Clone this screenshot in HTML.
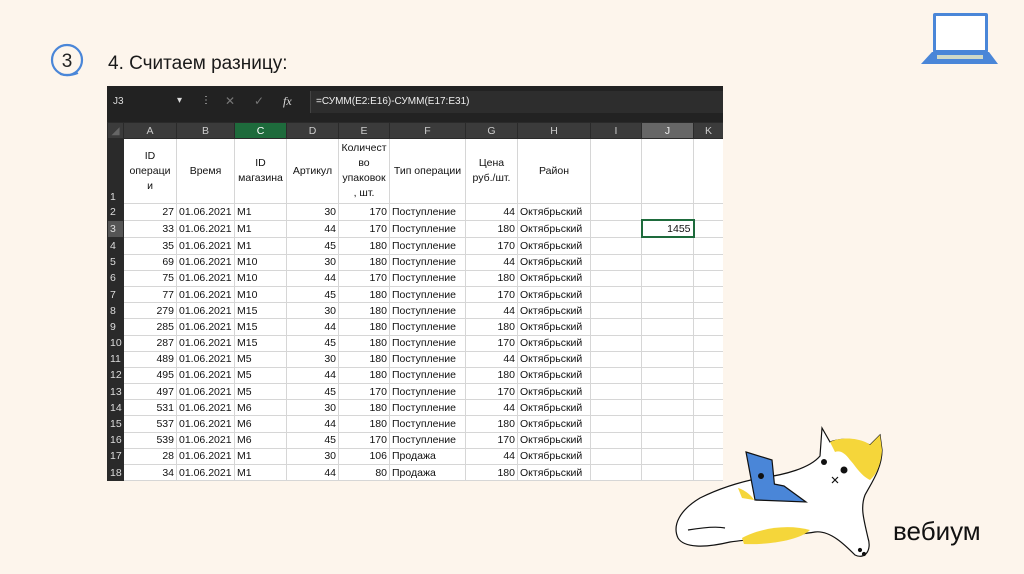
<!DOCTYPE html>
<html><head><meta charset="utf-8"><style>
body{margin:0;width:1024px;height:574px;background:#fdf5ec;position:relative;overflow:hidden;font-family:"Liberation Sans",sans-serif}
.t{position:absolute;left:108px;top:53px;font-size:19px;color:#1a1a1a}
.sheet{position:absolute;left:107px;top:86px;width:616px;height:395px;background:#222;overflow:hidden}
.fb{position:absolute;left:0;top:7px;height:20px;width:616px;font-size:10px;color:#ddd}
table{position:absolute;left:0;top:36px;width:616px;border-collapse:collapse;table-layout:fixed;font-family:"Liberation Sans",sans-serif;font-size:10.5px}
td{border:1px solid #d6d6d6;background:#fff;height:15.2px;padding:0 2px;white-space:nowrap;overflow:hidden;color:#111}
tr.h td{background:#3b3b3b;color:#ccc;text-align:center;height:15px;border:1px solid #2a2a2a}
td.rn{background:#2a2a2a;color:#ddd;border:1px solid #2a2a2a;text-align:left;padding-left:2px}
.r{text-align:right}.c{text-align:center;white-space:normal;line-height:15px}
</style></head><body>
<svg style="position:absolute;left:48px;top:42px" width="38" height="38"><circle cx="19" cy="18" r="15" fill="none" stroke="#4a86d8" stroke-width="2.2"/><path d="M12 32 Q20 35 30 31" stroke="#4a86d8" stroke-width="2" fill="none"/><text x="19" y="25" font-size="19" text-anchor="middle" font-family="Liberation Sans" fill="#222">3</text></svg>
<div class="t">4. Считаем разницу:</div>
<svg style="position:absolute;left:918px;top:10px" width="82" height="58"><rect x="15" y="3" width="55" height="40" rx="2" fill="#4a86d8"/><rect x="18" y="6" width="49" height="34" fill="#fff"/><path d="M14 42 H71 L80 54 H3 Z" fill="#4a86d8"/><rect x="19" y="45" width="46" height="4" fill="#cfd9c8"/></svg>
<div class="sheet">
<div class="fb"><span style="position:absolute;left:6px;top:3px">J3</span><span style="position:absolute;left:70px;top:2px">▾</span><span style="position:absolute;left:94px;top:2px">⋮</span><span style="position:absolute;left:118px;top:1px;color:#777;font-size:12px">✕</span><span style="position:absolute;left:147px;top:1px;color:#777;font-size:12px">✓</span><span style="position:absolute;left:176px;top:1px;font-style:italic;font-family:'Liberation Serif';font-size:12px">fx</span><div style="position:absolute;left:203px;top:-2px;width:413px;height:22px;background:#2d2d2d;border-left:1px solid #444"><span style="position:absolute;left:5px;top:5px;color:#eee">=СУММ(E2:E16)-СУММ(E17:E31)</span></div></div>
<table>
<colgroup><col style="width:16px"><col style="width:53px"><col style="width:58px"><col style="width:52px"><col style="width:52px"><col style="width:51px"><col style="width:76px"><col style="width:52px"><col style="width:73px"><col style="width:51px"><col style="width:52px"><col style="width:30px"></colgroup>
<tr class="h"><td style="color:#666">◢</td><td>A</td><td>B</td><td style="background:#1e6b3c;color:#fff">C</td><td>D</td><td>E</td><td>F</td><td>G</td><td>H</td><td>I</td><td style="background:#666;color:#eee">J</td><td>K</td></tr>
<tr style="height:65px"><td class="rn" style="vertical-align:bottom">1</td><td class="c">ID операци и</td><td class="c">Время</td><td class="c">ID магазина</td><td class="c">Артикул</td><td class="c">Количест во упаковок , шт.</td><td class="c">Тип операции</td><td class="c">Цена руб./шт.</td><td class="c">Район</td><td></td><td></td><td></td></tr>
<tr><td class="rn">2</td><td class="r">27</td><td>01.06.2021</td><td>M1</td><td class="r">30</td><td class="r">170</td><td>Поступление</td><td class="r">44</td><td>Октябрьский</td><td></td><td></td><td></td></tr>
<tr><td class="rn" style="background:#555">3</td><td class="r">33</td><td>01.06.2021</td><td>M1</td><td class="r">44</td><td class="r">170</td><td>Поступление</td><td class="r">180</td><td>Октябрьский</td><td></td><td class="r" style="border:2px solid #1e6b3c">1455</td><td></td></tr>
<tr><td class="rn">4</td><td class="r">35</td><td>01.06.2021</td><td>M1</td><td class="r">45</td><td class="r">180</td><td>Поступление</td><td class="r">170</td><td>Октябрьский</td><td></td><td></td><td></td></tr>
<tr><td class="rn">5</td><td class="r">69</td><td>01.06.2021</td><td>M10</td><td class="r">30</td><td class="r">180</td><td>Поступление</td><td class="r">44</td><td>Октябрьский</td><td></td><td></td><td></td></tr>
<tr><td class="rn">6</td><td class="r">75</td><td>01.06.2021</td><td>M10</td><td class="r">44</td><td class="r">170</td><td>Поступление</td><td class="r">180</td><td>Октябрьский</td><td></td><td></td><td></td></tr>
<tr><td class="rn">7</td><td class="r">77</td><td>01.06.2021</td><td>M10</td><td class="r">45</td><td class="r">180</td><td>Поступление</td><td class="r">170</td><td>Октябрьский</td><td></td><td></td><td></td></tr>
<tr><td class="rn">8</td><td class="r">279</td><td>01.06.2021</td><td>M15</td><td class="r">30</td><td class="r">180</td><td>Поступление</td><td class="r">44</td><td>Октябрьский</td><td></td><td></td><td></td></tr>
<tr><td class="rn">9</td><td class="r">285</td><td>01.06.2021</td><td>M15</td><td class="r">44</td><td class="r">180</td><td>Поступление</td><td class="r">180</td><td>Октябрьский</td><td></td><td></td><td></td></tr>
<tr><td class="rn">10</td><td class="r">287</td><td>01.06.2021</td><td>M15</td><td class="r">45</td><td class="r">180</td><td>Поступление</td><td class="r">170</td><td>Октябрьский</td><td></td><td></td><td></td></tr>
<tr><td class="rn">11</td><td class="r">489</td><td>01.06.2021</td><td>M5</td><td class="r">30</td><td class="r">180</td><td>Поступление</td><td class="r">44</td><td>Октябрьский</td><td></td><td></td><td></td></tr>
<tr><td class="rn">12</td><td class="r">495</td><td>01.06.2021</td><td>M5</td><td class="r">44</td><td class="r">180</td><td>Поступление</td><td class="r">180</td><td>Октябрьский</td><td></td><td></td><td></td></tr>
<tr><td class="rn">13</td><td class="r">497</td><td>01.06.2021</td><td>M5</td><td class="r">45</td><td class="r">170</td><td>Поступление</td><td class="r">170</td><td>Октябрьский</td><td></td><td></td><td></td></tr>
<tr><td class="rn">14</td><td class="r">531</td><td>01.06.2021</td><td>M6</td><td class="r">30</td><td class="r">180</td><td>Поступление</td><td class="r">44</td><td>Октябрьский</td><td></td><td></td><td></td></tr>
<tr><td class="rn">15</td><td class="r">537</td><td>01.06.2021</td><td>M6</td><td class="r">44</td><td class="r">180</td><td>Поступление</td><td class="r">180</td><td>Октябрьский</td><td></td><td></td><td></td></tr>
<tr><td class="rn">16</td><td class="r">539</td><td>01.06.2021</td><td>M6</td><td class="r">45</td><td class="r">170</td><td>Поступление</td><td class="r">170</td><td>Октябрьский</td><td></td><td></td><td></td></tr>
<tr><td class="rn">17</td><td class="r">28</td><td>01.06.2021</td><td>M1</td><td class="r">30</td><td class="r">106</td><td>Продажа</td><td class="r">44</td><td>Октябрьский</td><td></td><td></td><td></td></tr>
<tr><td class="rn">18</td><td class="r">34</td><td>01.06.2021</td><td>M1</td><td class="r">44</td><td class="r">80</td><td>Продажа</td><td class="r">180</td><td>Октябрьский</td><td></td><td></td><td></td></tr>
</table></div>
<svg style="position:absolute;left:660px;top:420px" width="240" height="154" fill="none" stroke="#111" stroke-width="1.2">
<path d="M160 36 C150 48 125 55 100 58 C80 62 60 68 40 78 C20 90 12 105 18 118 C24 128 45 128 70 122 C100 118 130 116 155 112 C170 110 185 125 195 135 C205 140 212 130 208 118 C204 100 200 88 205 75 C212 62 222 48 222 30 L220 15 L210 25 C195 18 180 18 170 22 L162 8 Z" fill="#fff"/>
<path d="M170 22 C185 15 205 20 210 25 L220 15 L222 30 C221 45 216 55 210 60 C200 55 195 45 190 40 C185 33 180 30 175 32 Z" fill="#f5d63a" stroke="none"/>
<path d="M82 118 C100 108 128 104 150 110 C140 120 110 125 84 124 Z" fill="#f5d63a" stroke="none"/>
<path d="M78 68 C85 70 92 76 94 80 L82 78 Z" fill="#f5d63a" stroke="none"/>
<path d="M86 32 L112 40 L116 80 L95 80 Z" fill="#4a86d8"/>
<path d="M96 80 L146 82 L124 66 L114 64" fill="#4a86d8"/>
<circle cx="101" cy="56" r="3" fill="#111" stroke="none"/>
<circle cx="164" cy="42" r="3" fill="#111" stroke="none"/><circle cx="184" cy="50" r="3.5" fill="#111" stroke="none"/>
<path d="M28 110 C40 108 55 106 65 108 M172 57 L178 63 M178 57 L172 63"/>
<circle cx="200" cy="130" r="1.5" fill="#111"/><circle cx="204" cy="134" r="1.5" fill="#111"/>
</svg>
<div style="position:absolute;left:893px;top:516px;font-size:26px;color:#111">вебиум</div>
</body></html>
